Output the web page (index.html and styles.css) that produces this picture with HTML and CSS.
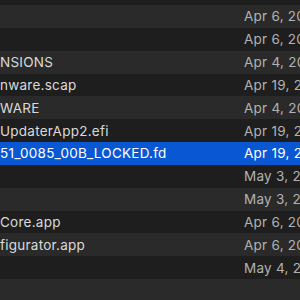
FILE: index.html
```html
<!DOCTYPE html>
<html>
<head>
  <title>Finder list</title>
  <link rel="stylesheet" href="styles.css">
</head>
<body>
  <div class="file-list">
    <div class="row"><span class="name"></span><span class="date"></span></div>
    <div class="row"><span class="name"></span><span class="date">Apr 6, 2023 at 10:12 AM</span></div>
    <div class="row"><span class="name"></span><span class="date">Apr 6, 2023 at 10:12 AM</span></div>
    <div class="row"><span class="name">NSIONS</span><span class="date">Apr 4, 2023 at 9:41 PM</span></div>
    <div class="row"><span class="name">nware.scap</span><span class="date">Apr 19, 2023 at 8:03 PM</span></div>
    <div class="row"><span class="name">WARE</span><span class="date">Apr 4, 2023 at 9:41 PM</span></div>
    <div class="row"><span class="name">UpdaterApp2.efi</span><span class="date">Apr 19, 2023 at 8:03 PM</span></div>
    <div class="row selected"><span class="name">51_0085_00B_LOCKED.fd</span><span class="date">Apr 19, 2023 at 8:03 PM</span></div>
    <div class="row"><span class="name"></span><span class="date">May 3, 2023 at 11:20 AM</span></div>
    <div class="row"><span class="name"></span><span class="date">May 3, 2023 at 11:20 AM</span></div>
    <div class="row"><span class="name">Core.app</span><span class="date">Apr 6, 2023 at 10:12 AM</span></div>
    <div class="row"><span class="name">figurator.app</span><span class="date">Apr 6, 2023 at 10:12 AM</span></div>
    <div class="row"><span class="name"></span><span class="date">May 4, 2023 at 2:47 PM</span></div>
    <div class="row"><span class="name"></span><span class="date"></span></div>
  </div>
</body>
</html>
```

FILE: styles.css
```css
body {
  font-family: Inter, "Noto Sans", sans-serif;
  font-size: 13.5px;
  letter-spacing: 0.25px;
  background-color: #2a2a2a;
  color: #dadada;
  margin: 0;
  padding: 0;
  overflow: hidden;
}

.file-list {
  margin-top: -17.85px;
}

.row {
  display: grid;
  grid-template-columns: 244px 1fr;
  align-items: center;
  height: 22.85px;
  white-space: nowrap;
  background-color: #1e1e1e;
}

.row:nth-child(even) {
  background-color: #2a2a2a;
}

.row.selected {
  background-color: #0a57d4;
  color: #fff;
}

.name {
  overflow: hidden;
}

.date {
  color: #b2b2b2;
}

.row.selected .date {
  color: #fff;
}
```
